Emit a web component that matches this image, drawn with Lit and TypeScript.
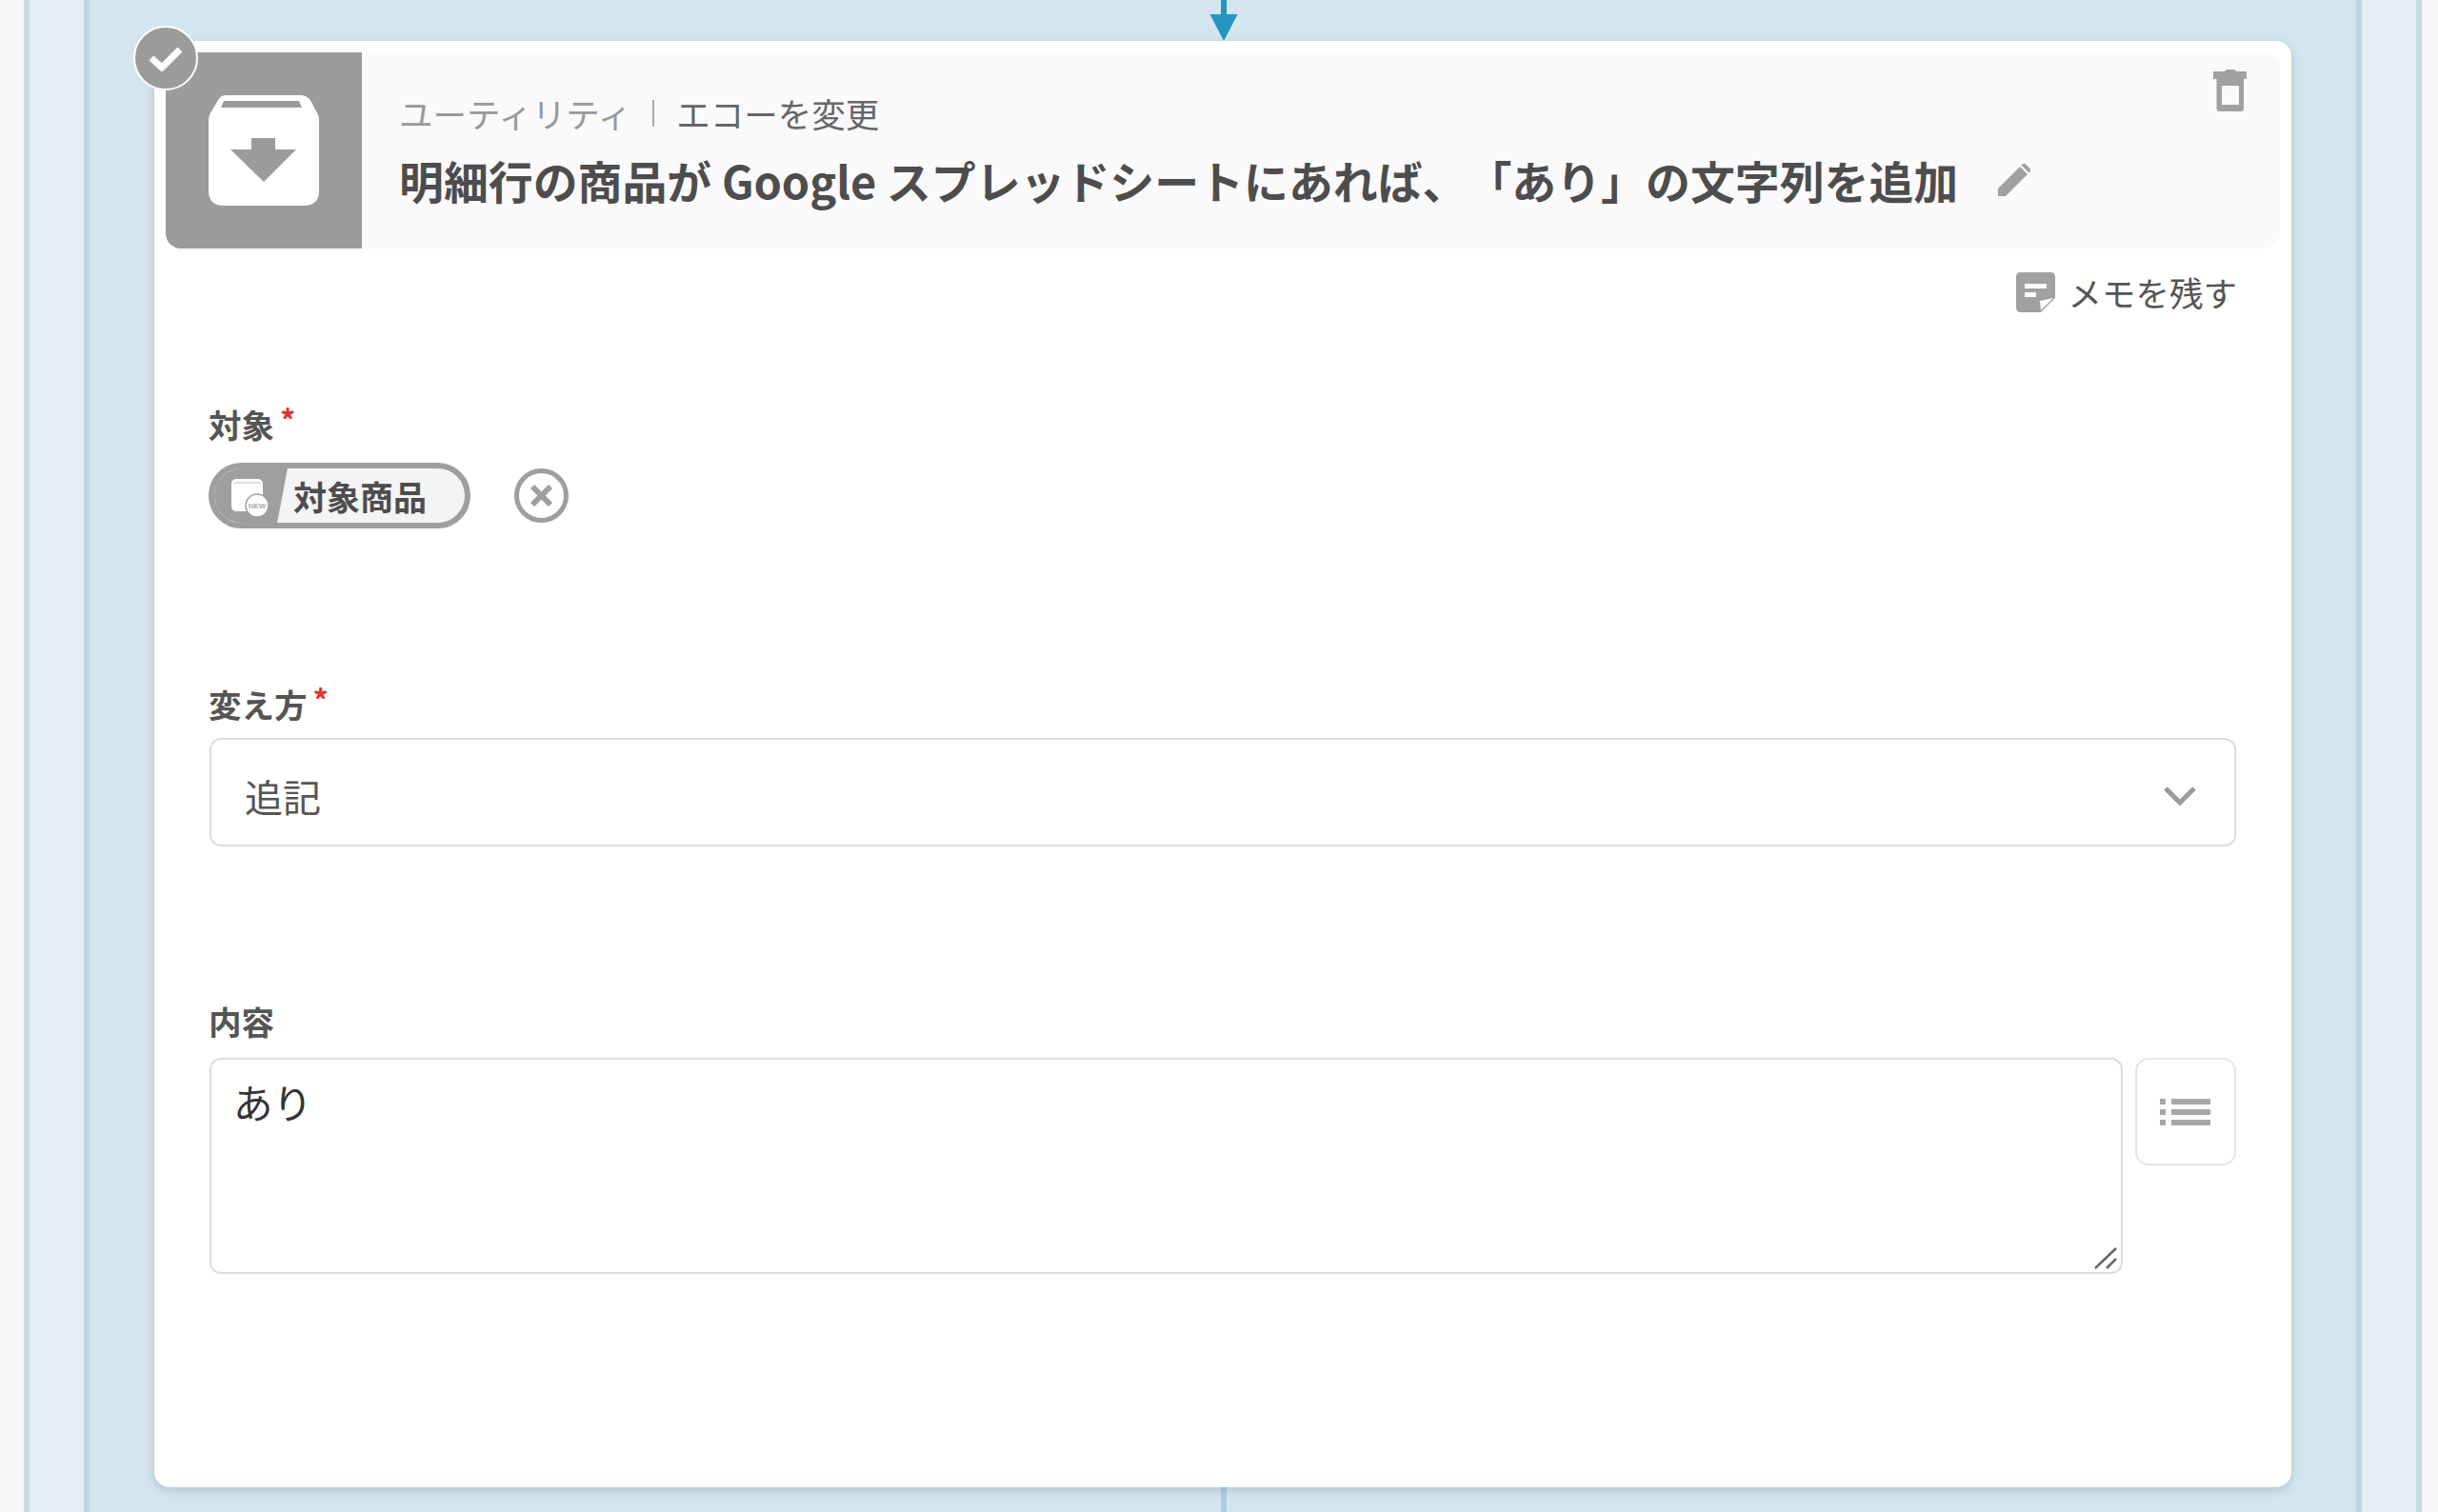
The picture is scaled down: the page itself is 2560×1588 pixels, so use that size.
import { LitElement, html, css } from "lit";
import { customElement } from "lit/decorators.js";

@customElement("app-root")
export class AppRoot extends LitElement {
  static styles = css`
    :host {
      display: block;
      height: 1588px;
      overflow: hidden;
      font-family: "Noto Sans CJK JP", "Noto Sans", sans-serif;
      color: #555;
      background: #f5f6f8;
      text-spacing-trim: space-all;
    }
    * { box-sizing: border-box; }
    .outer {
      height: 1588px;
      margin: 0 17px 0 25px;
      border-left: 6px solid #c5dde9;
      border-right: 6px solid #c5dde9;
      background: #e6edf4;
      padding: 0 57px;
    }
    .inner {
      position: relative;
      height: 1588px;
      border-left: 6px solid #b9d8e6;
      border-right: 6px solid #b9d8e6;
      background: #d5e5ee;
      padding: 43px 68px 0;
    }
    .arrow { position: absolute; left: 1176px; top: 0; width: 30px; height: 43px; }
    .tail { position: absolute; left: 1188px; top: 1562px; width: 6px; height: 26px; background: #a9d0e0; }
    .card {
      position: relative;
      height: 1519px;
      background: #fff;
      border-radius: 16px;
      box-shadow: 0 3px 10px rgba(60, 90, 110, 0.25);
      padding: 12px 12px 0;
    }
    .head {
      display: flex;
      height: 206px;
      background: #fafafa;
      border-radius: 0 16px 16px 16px;
    }
    .head-icon {
      flex: 0 0 206px;
      background: #9b9b9b;
      border-radius: 0 0 0 16px;
      display: flex;
      align-items: center;
      justify-content: center;
    }
    .check {
      position: absolute;
      left: -22px;
      top: -16px;
      width: 68px;
      height: 68px;
      border-radius: 50%;
      border: 2px solid #fff;
      background: #9b9b9b;
      display: flex;
      align-items: center;
      justify-content: center;
    }
    .head-body { flex: 1; padding: 0 0 0 39px; position: relative; }
    .sub {
      display: flex;
      align-items: center;
      height: 34px;
      margin-top: 47px;
      font-size: 35.5px;
      line-height: 34px;
    }
    .cat { color: #999; }
    .sep { width: 2px; height: 28px; background: #aaa; margin: 0 23px 0 22px; }
    .act { color: #666; }
    .title {
      display: flex;
      align-items: center;
      margin-top: 27px;
      height: 52px;
      font-size: 46.9px;
      line-height: 52px;
      font-weight: 700;
      color: #4d4d4d;
      white-space: nowrap;
    }
    .pencil { margin-left: 41px; }
    .trash { position: absolute; right: 34px; top: 18px; }
    .memo {
      display: flex;
      justify-content: flex-end;
      align-items: center;
      gap: 13px;
      height: 42px;
      margin-top: 25px;
      margin-right: 45px;
      font-size: 35.5px;
      line-height: 42px;
      color: #555;
    }
    .form { padding: 0 46px; }
    .label {
      font-size: 34.5px;
      line-height: 40px;
      height: 40px;
      font-weight: 700;
      color: #555;
      display: flex;
      margin-left: -1px;
    }
    .req { color: #e53030; font-size: 32px; line-height: 30px; margin-left: 6px; font-weight: 700; }
    .f1 { margin-top: 97px; }
    .targets { display: flex; align-items: center; margin-top: 21px; margin-left: -1px; gap: 46px; }
    .chip {
      position: relative;
      display: flex;
      align-items: center;
      width: 275px;
      height: 69px;
      border: 6px solid #9e9e9e;
      border-radius: 35px;
      background: #f4f4f4;
      overflow: hidden;
      font-size: 35px;
      font-weight: 700;
      line-height: 57px;
      color: #4d4d4d;
      padding-left: 83px;
    }
    .chip-left {
      position: absolute;
      left: -6px;
      top: -6px;
      width: 84px;
      height: 69px;
      background: #9e9e9e;
      clip-path: polygon(0 0, 100% 0, 84.5% 100%, 0 100%);
    }
    .chip-icon { position: absolute; left: 18px; top: 11px; }
    .chip-text { position: relative; }
    .new {
      font-size: 8px;
      font-family: "Liberation Sans", sans-serif;
      fill: #aaa;
    }
    .f2 { margin-top: 164px; }
    .select {
      display: flex;
      align-items: center;
      justify-content: space-between;
      height: 114px;
      margin-top: 16px;
      border: 2px solid #ddd;
      border-radius: 12px;
      padding: 0 40px 0 35px;
      font-size: 40px;
      line-height: 52px;
      color: #555;
    }
    .select span, .select svg { position: relative; top: 4px; }
    .f3 { margin-top: 163px; }
    .content { display: flex; gap: 13px; margin-top: 19px; align-items: flex-start; }
    .ta-wrap { position: relative; flex: 1; height: 227px; }
    textarea {
      width: 100%;
      height: 100%;
      border: 2px solid #ddd;
      border-radius: 12px;
      padding: 16px 23px;
      font: 400 41.5px/56px "Noto Sans CJK JP", sans-serif;
      color: #333;
      background: #fff;
      outline: none;
      resize: none;
      display: block;
    }
    .grip { position: absolute; right: 6px; bottom: 5px; }
    .list {
      flex: 0 0 106px;
      height: 113px;
      border: 2px solid #e6e6e6;
      border-radius: 14px;
      display: flex;
      align-items: center;
      justify-content: center;
      padding-bottom: 2px;
    }
  `;

  render() {
    return html`
      <div class="outer">
        <div class="inner">
          <svg class="arrow" viewBox="0 0 30 43">
            <rect x="12" y="0" width="6" height="16" fill="#2296bf"></rect>
            <path d="M0.5 15H29.5L15 43Z" fill="#2296bf"></path>
          </svg>
          <div class="tail"></div>
          <div class="card">
            <div class="check">
              <svg width="36" height="27" viewBox="0 0 36 27">
                <path d="M3 13l11 10L33 4" fill="none" stroke="#fff" stroke-width="7"></path>
              </svg>
            </div>
            <div class="head">
              <div class="head-icon">
                <svg width="116" height="116" viewBox="0 0 116 116">
                  <path d="M18 0H97Q104 0 108 7L113 17Q116 21 116 27V100Q116 116 100 116H16Q0 116 0 100V27Q0 21 3 17L9 7Q12 0 18 0Z" fill="#fff"></path>
                  <path d="M16 6H95L98 13H13Z" fill="#9b9b9b"></path>
                  <path d="M45 45H70V57H92L58 91L23 57H45Z" fill="#9b9b9b"></path>
                </svg>
              </div>
              <div class="head-body">
                <div class="sub">
                  <span class="cat">ユーティリティ</span><i class="sep"></i><span class="act">エコーを変更</span>
                </div>
                <div class="title">
                  明細行の商品が Google スプレッドシートにあれば、「あり」の文字列を追加
                  <svg class="pencil" width="36" height="36" viewBox="0 0 36 36">
                    <path d="M1 27L24 4L32 12L9 35H1Z" fill="#a0a0a0"></path>
                    <path d="M26.5 1.5Q28 0 30 1.5L34.5 6Q36 8 34.5 9.5L33.5 10.5L25.5 2.5Z" fill="#a0a0a0"></path>
                  </svg>
                </div>
                <svg class="trash" width="36" height="44" viewBox="0 0 36 44">
                  <path d="M0 2H12Q13 0 15 0H21Q23 0 24 2H35V10H0Z" fill="#a0a0a0"></path>
                  <path fill-rule="evenodd" d="M3.5 10H32V41Q32 44 29 44H6.5Q3.5 44 3.5 41ZM9 17V37H27V17Z" fill="#a0a0a0"></path>
                </svg>
              </div>
            </div>
            <div class="memo">
              <svg width="41" height="42" viewBox="0 0 41 42">
                <path d="M5 0H36Q41 0 41 5V27L26 42H5Q0 42 0 37V5Q0 0 5 0Z" fill="#a0a0a0"></path>
                <rect x="9" y="12" width="23" height="5" fill="#fff"></rect>
                <rect x="9" y="21" width="12" height="5" fill="#fff"></rect>
                <path d="M26 40L25 30L39 27Z" fill="#fff"></path>
              </svg>
              <span>メモを残す</span>
            </div>
            <div class="form">
              <div class="label f1">対象<span class="req">*</span></div>
              <div class="targets">
                <div class="chip">
                  <div class="chip-left"></div>
                  <svg class="chip-icon" width="44" height="42" viewBox="0 0 44 42">
                    <rect x="0" y="0" width="33" height="34" rx="5" fill="#fff"></rect>
                    <rect x="3" y="3" width="27" height="2" fill="#ddd"></rect>
                    <circle cx="27" cy="28" r="12" fill="#fff" stroke="#9e9e9e" stroke-width="1.5"></circle>
                    <text class="new" x="27" y="31" text-anchor="middle">NEW</text>
                  </svg>
                  <span class="chip-text">対象商品</span>
                </div>
                <svg width="57" height="57" viewBox="0 0 57 57">
                  <circle cx="28.5" cy="28.5" r="26" fill="none" stroke="#9e9e9e" stroke-width="5"></circle>
                  <path d="M19 19L38 38M38 19L19 38" stroke="#9e9e9e" stroke-width="6" fill="none"></path>
                </svg>
              </div>
              <div class="label f2">変え方<span class="req">*</span></div>
              <div class="select">
                <span>追記</span>
                <svg width="34" height="22" viewBox="0 0 34 22">
                  <path d="M2 3L17 18L32 3" fill="none" stroke="#9a9a9a" stroke-width="5"></path>
                </svg>
              </div>
              <div class="label f3">内容</div>
              <div class="content">
                <div class="ta-wrap">
                  <textarea .value=${"あり"}></textarea>
                  <svg class="grip" width="24" height="24" viewBox="0 0 24 24">
                    <path d="M1 23L23 2M13 23L23 13" stroke="#666" stroke-width="2.5" fill="none"></path>
                  </svg>
                </div>
                <div class="list">
                  <svg width="54" height="30" viewBox="0 0 54 30">
                    <rect x="0" y="2" width="6" height="6" fill="#a6a6a6"></rect>
                    <rect x="12" y="2" width="41" height="6" fill="#a6a6a6"></rect>
                    <rect x="0" y="13" width="6" height="6" fill="#a6a6a6"></rect>
                    <rect x="12" y="13" width="41" height="6" fill="#a6a6a6"></rect>
                    <rect x="0" y="24" width="6" height="6" fill="#a6a6a6"></rect>
                    <rect x="12" y="24" width="41" height="6" fill="#a6a6a6"></rect>
                  </svg>
                </div>
              </div>
            </div>
          </div>
        </div>
      </div>
    `;
  }
}
